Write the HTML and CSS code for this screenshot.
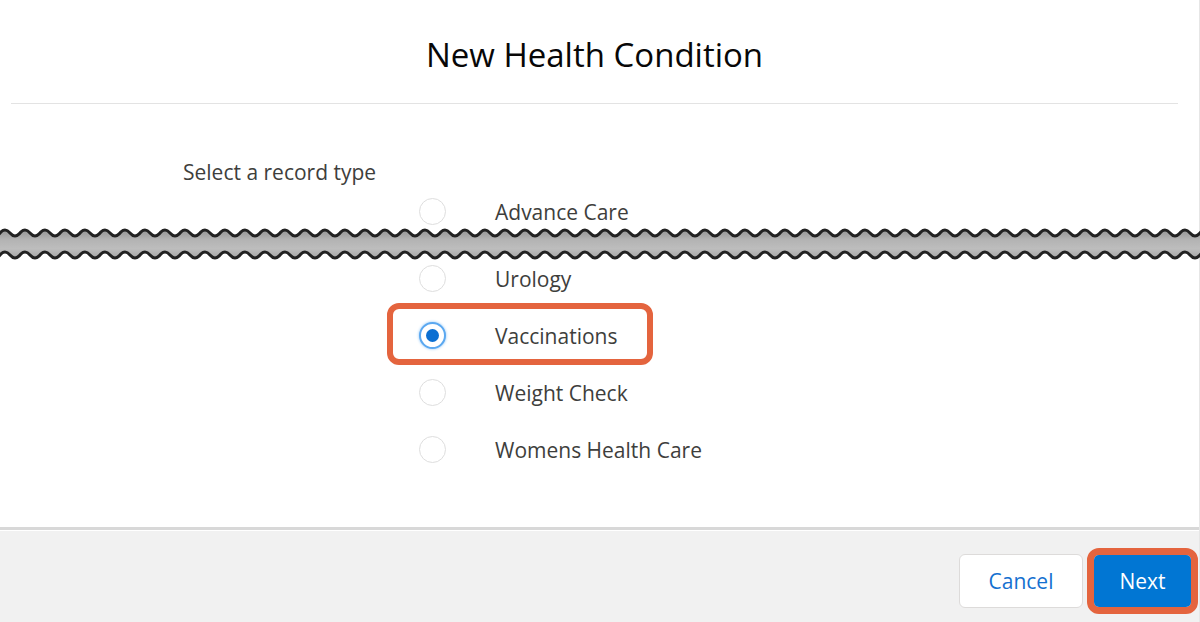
FILE: index.html
```html
<!DOCTYPE html>
<html lang="en">
<head>
    <meta charset="UTF-8">
    <title>New Health Condition</title>
    <link rel="stylesheet" href="styles.css">
</head>
<body>
    <div class="modal">
        <div class="modal-header">
            <h2>New Health Condition</h2>
        </div>

        <div class="modal-body">
            <div class="field-label">Select a record type</div>

            <div class="options">
                <label class="option">
                    <span class="radio"></span>
                    <span class="option-text">Advance Care</span>
                </label>

                <!-- torn edge: list cut short here -->
                <svg class="tear" width="1200" height="36" viewBox="0 0 1200 36">
                    <defs>
                        <linearGradient id="tearFill" x1="0" y1="0" x2="0" y2="36" gradientUnits="userSpaceOnUse">
                            <stop offset="0" stop-color="#8c8c8c"/>
                            <stop offset="0.35" stop-color="#b3b3b3"/>
                            <stop offset="0.6" stop-color="#bdbdbd"/>
                            <stop offset="1" stop-color="#9c9c9c"/>
                        </linearGradient>
                        <pattern id="tearTile" width="20" height="36" patternUnits="userSpaceOnUse">
                            <path d="M-20,6 Q-15,0 -10,6 T0,6 T10,6 T20,6 T30,6 T40,6 L40,28 Q35,34 30,28 T20,28 T10,28 T0,28 T-10,28 T-20,28 Z" fill="url(#tearFill)"/>
                            <path d="M-20,6 Q-15,0 -10,6 T0,6 T10,6 T20,6 T30,6 T40,6" fill="none" stroke="#222" stroke-width="3"/>
                            <path d="M-20,28 Q-15,22 -10,28 T0,28 T10,28 T20,28 T30,28 T40,28" fill="none" stroke="#222" stroke-width="3"/>
                        </pattern>
                    </defs>
                    <rect width="1200" height="36" fill="url(#tearTile)"/>
                </svg>

                <label class="option after-tear">
                    <span class="radio"></span>
                    <span class="option-text">Urology</span>
                </label>
                <label class="option callout-row">
                    <span class="radio checked"></span>
                    <span class="option-text">Vaccinations</span>
                </label>
                <label class="option">
                    <span class="radio"></span>
                    <span class="option-text">Weight Check</span>
                </label>
                <label class="option">
                    <span class="radio"></span>
                    <span class="option-text">Womens Health Care</span>
                </label>
            </div>
        </div>

        <div class="modal-footer">
            <button class="btn btn-neutral">Cancel</button>
            <span class="callout">
                <button class="btn btn-brand">Next</button>
            </span>
        </div>
    </div>
</body>
</html>
```

FILE: styles.css
```css
body {
    margin: 0;
    background: #fff;
    font-family: "Open Sans", "Noto Sans", sans-serif;
    color: #3e3e3c;
}
.modal {
    height: 622px;
    display: flex;
    flex-direction: column;
    border-right: 1px solid #e6e6e6;
    box-sizing: border-box;
}
.modal-header {
    height: 103px;
    margin: 0 21px 0 11px;
    border-bottom: 1px solid #e3e3e3;
    display: flex;
    align-items: center;
    justify-content: center;
}
.modal-header h2 {
    margin: 6px 0 0;
    font-size: 33px;
    font-weight: 400;
    color: #080707;
}
.modal-body {
    flex: 1;
}
.field-label {
    margin: 55px 0 0 183px;
    font-size: 21px;
    line-height: 26px;
}
.options {
    position: relative;
    margin-top: -2px;
    padding-left: 419px;
}
.option {
    position: relative;
    display: flex;
    align-items: center;
    height: 57px;
    font-size: 21px;
}
.option.after-tear { margin-top: 10px; }
.radio {
    width: 27px;
    height: 27px;
    border: 1px solid #dedede;
    border-radius: 50%;
    box-sizing: border-box;
    background: #fff;
    display: flex;
    align-items: center;
    justify-content: center;
}
.radio.checked {
    border: 2px solid #5ba8f0;
    box-shadow: 0 0 3px #8cc4f7;
}
.radio.checked::after {
    content: "";
    width: 13px;
    height: 13px;
    border-radius: 50%;
    background: #0b6fd2;
}
.option-text {
    margin-left: 49px;
}
.callout-row::before {
    content: "";
    position: absolute;
    left: -32px;
    top: -4px;
    width: 266px;
    height: 62px;
    border: 6px solid #e4643e;
    border-radius: 12px;
    box-sizing: border-box;
}
.tear {
    position: absolute;
    left: 0;
    top: 44px;
    display: block;
}
.modal-footer {
    height: 95px;
    box-sizing: border-box;
    padding: 9px 1px 0 0;
    border-top: 3px solid #d8d8d8;
    box-shadow: inset 0 1px 0 #fff;
    background: #f1f1f1;
    display: flex;
    align-items: center;
    justify-content: flex-end;
    gap: 4px;
}
.btn {
    font-family: inherit;
    font-size: 21px;
    border-radius: 6px;
    cursor: pointer;
}
.btn-neutral {
    width: 124px;
    height: 54px;
    background: #fff;
    border: 1px solid #dddbda;
    color: #1470d0;
}
.callout {
    display: block;
    border: 7px solid #e4643e;
    border-radius: 12px;
    line-height: 0;
}
.btn-brand {
    width: 97px;
    height: 52px;
    background: #0176d3;
    border: none;
    border-radius: 5px;
    color: #fff;
}
```
